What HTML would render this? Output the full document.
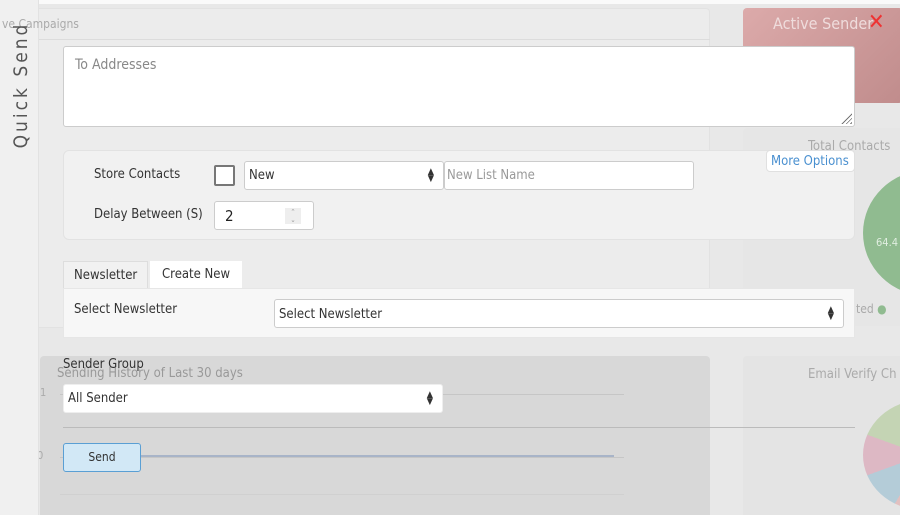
<!DOCTYPE html><html><head><style>
*{box-sizing:border-box;margin:0;padding:0}
html,body{width:900px;height:515px;overflow:hidden}
body{background:#e8e8e8;font-family:"DejaVu Sans Condensed","DejaVu Sans","Liberation Sans",sans-serif;font-size:13px;color:#333;position:relative}
.a{position:absolute;white-space:nowrap}
.in{background:#fff;border:1px solid #ccc;border-radius:3px}
.g{color:#aaa}
.arr{position:absolute;right:9px;top:50%;transform:translateY(-50%);font-size:9px;line-height:7px;color:#333}
</style></head><body>
<div class="a" style="left:0;top:0;width:900px;height:4px;background:#fafafa"></div>
<div class="a" style="left:0;top:8px;width:710px;height:320px;background:#ececec;border:1px solid #e2e2e2;border-radius:4px"></div>
<div class="a" style="left:0;top:39px;width:710px;height:1px;background:#dcdcdc"></div>
<div class="a" style="left:743px;top:8px;width:160px;height:95px;background:linear-gradient(135deg,#dcaaaa,#c08c8c);border-radius:4px"></div>
<div class="a" style="left:773px;top:14px;font-size:16px;color:#efdcdc">Active Sender</div>
<div class="a" style="left:868px;top:10px;font-size:22px;color:#e33;line-height:26px">✕</div>
<div class="a" style="left:743px;top:128px;width:160px;height:198px;background:#e6e6e6;border-radius:4px"></div>
<div class="a g" style="left:808px;top:139px;font-size:13px">Total Contacts</div>
<div class="a" style="left:863px;top:170px;width:130px;height:126px;border-radius:50%;background:#90bb90"></div>
<div class="a" style="left:876px;top:236px;font-size:11px;color:#e0eee0">64.4</div>
<div class="a g" style="left:856px;top:302px;font-size:12px">ted <span style="color:#90bb90">●</span></div>
<div class="a" style="left:40px;top:356px;width:670px;height:170px;background:#d8d8d8;border-radius:4px"></div>
<div class="a" style="left:743px;top:356px;width:160px;height:170px;background:#e4e4e4;border-radius:4px"></div>
<div class="a g" style="left:808px;top:367px;font-size:13px">Email Verify Ch</div>
<div class="a" style="left:863px;top:400px;width:120px;height:110px;border-radius:50%;background:conic-gradient(from 180deg,#e2c0c0 0 30deg,#b4ccd8 30deg 70deg,#ddb8c4 70deg 110deg,#c4d4b4 110deg 170deg,#b8c8dd 170deg 190deg,#ccc 190deg 360deg)"></div>
<div class="a" style="left:57px;top:366px;font-size:13px;color:#999">Sending History of Last 30 days</div>
<div class="a" style="left:40px;top:386px;color:#aaa;font-size:11px">1</div>
<div class="a" style="left:37px;top:449px;color:#aaa;font-size:11px">0</div>
<div class="a" style="left:60px;top:394px;width:564px;height:1px;background:#c6c6c6"></div>
<div class="a" style="left:60px;top:457px;width:564px;height:1px;background:#c6c6c6"></div>
<div class="a" style="left:140px;top:455px;width:474px;height:2px;background:#a8b4c8"></div>
<div class="a" style="left:60px;top:494px;width:564px;height:1px;background:#d0d0d0"></div>
<div class="a" style="left:0;top:0;width:39px;height:515px;background:#f0f0f0;border-right:1px solid #e2e2e2"></div>
<div class="a" style="left:2px;top:17px;font-size:12px;color:#aaa">ve Campaigns</div>
<div class="a" style="left:21px;top:85px;transform:translate(-50%,-50%) rotate(-90deg);font-size:19px;letter-spacing:3px;color:#555">Quick Send</div>
<div class="a in" style="left:63px;top:46px;width:792px;height:81px"><div style="position:absolute;left:11px;top:10px;font-size:14px;color:#888">To Addresses</div>
<div style="position:absolute;right:2px;bottom:2px;width:11px;height:11px;background:repeating-linear-gradient(135deg,transparent 0 2px,#777 2px 3px);clip-path:polygon(100% 0,100% 100%,0 100%)"></div></div>
<div class="a" style="left:63px;top:150px;width:792px;height:90px;background:#f1f1f1;border:1px solid #e2e2e2;border-radius:6px"></div>
<div class="a" style="left:94px;top:167px">Store Contacts</div>
<div class="a" style="left:214px;top:165px;width:21px;height:21px;border:2px solid #777;border-radius:2px;background:#fff"></div>
<div class="a in" style="left:244px;top:161px;width:200px;height:29px;padding:6px 4px">New<div class="arr">▲<br>▼</div></div>
<div class="a in" style="left:444px;top:161px;width:250px;height:29px;padding:6px 2px;color:#999">New List Name</div>
<div class="a" style="left:766px;top:150px;width:89px;height:22px;background:#fff;border:1px solid #e0e0e0;border-radius:4px;color:#4a90d0;padding:3px 4px">More Options</div>
<div class="a" style="left:94px;top:207px">Delay Between (S)</div>
<div class="a in" style="left:214px;top:201px;width:100px;height:29px;padding:5px 10px;font-size:15px;color:#222">2<div style="position:absolute;right:12px;top:6px;width:16px;height:16px;background:#eee;font-size:7px;line-height:8px;text-align:center;color:#999">⌃<br>⌄</div></div>
<div class="a" style="left:63px;top:261px;width:85px;height:28px;background:#f1f1f1;border:1px solid #ddd;border-bottom:none;padding:6px 10px">Newsletter</div>
<div class="a" style="left:150px;top:261px;width:92px;height:27px;background:#fff;padding:6px 12px">Create New</div>
<div class="a" style="left:63px;top:288px;width:792px;height:50px;background:#f7f7f7;border:1px solid #e6e6e6"></div>
<div class="a" style="left:74px;top:302px">Select Newsletter</div>
<div class="a in" style="left:274px;top:299px;width:570px;height:29px;padding:7px 4px">Select Newsletter<div class="arr">▲<br>▼</div></div>
<div class="a" style="left:63px;top:357px">Sender Group</div>
<div class="a in" style="left:63px;top:384px;width:380px;height:29px;padding:6px 4px;border-color:#eee">All Sender<div class="arr">▲<br>▼</div></div>
<div class="a" style="left:63px;top:427px;width:792px;height:1px;background:#bbb"></div>
<div class="a" style="left:63px;top:443px;width:78px;height:29px;background:#d2e8f6;border:1px solid #5a9fd4;border-radius:3px;text-align:center;padding-top:6px;font-size:12px">Send</div>
</body></html>
